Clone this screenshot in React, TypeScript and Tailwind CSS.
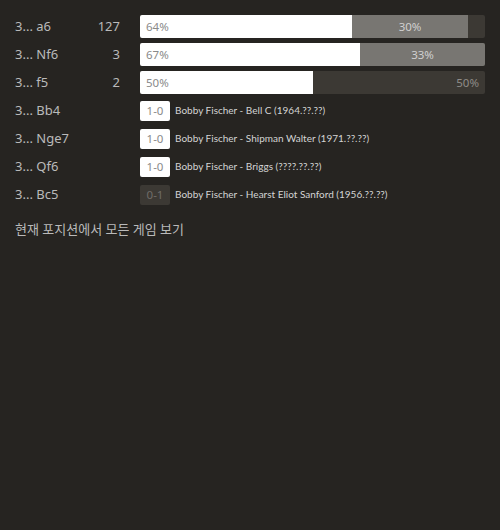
const moves = [
  { san: "a6", count: 127, white: 212, draw: 116, wLabel: "64%", dLabel: "30%", bLabel: "" },
  { san: "Nf6", count: 3, white: 220, draw: 125, wLabel: "67%", dLabel: "33%", bLabel: "" },
  { san: "f5", count: 2, white: 173, draw: 0, wLabel: "50%", dLabel: "", bLabel: "50%" },
];

const games = [
  { san: "Bb4", result: "1-0", text: "Bobby Fischer - Bell C (1964.??.??)" },
  { san: "Nge7", result: "1-0", text: "Bobby Fischer - Shipman Walter (1971.??.??)" },
  { san: "Qf6", result: "1-0", text: "Bobby Fischer - Briggs (????.??.??)" },
  { san: "Bc5", result: "0-1", text: "Bobby Fischer - Hearst Eliot Sanford (1956.??.??)" },
];

export default function App() {
  return (
    <div
      className="w-[500px] h-[530px] bg-[#262421] text-[#bababa] pt-[15px] px-[15px]"
      style={{ fontFamily: '"Noto Sans", "Noto Sans CJK KR", sans-serif' }}
    >
      {moves.map((m) => (
        <div key={m.san} className="flex items-center h-[23px] mb-[5px] text-[13px]">
          <div className="w-[80px]">3... {m.san}</div>
          <div className="w-[25px] text-right">{m.count}</div>
          <div className="ml-[20px] flex-1 flex h-full rounded-[2px] overflow-hidden bg-[#3c3934] text-[11.5px]">
            <div
              className="shrink-0 bg-white text-[#8a8a8a] flex items-center pl-[6px]"
              style={{ width: m.white }}
            >
              {m.wLabel}
            </div>
            {m.draw > 0 && (
              <div
                className="shrink-0 bg-[#787672] text-[#d0d0d0] flex items-center justify-center"
                style={{ width: m.draw }}
              >
                {m.dLabel}
              </div>
            )}
            <div className="flex-1 flex items-center justify-end pr-[6px] text-[#8f8c88]">
              {m.bLabel}
            </div>
          </div>
        </div>
      ))}
      {games.map((g) => (
        <div key={g.san} className="flex items-center h-[23px] mb-[5px] text-[13px]">
          <div className="w-[125px]">3... {g.san}</div>
          <div
            className={
              "w-[30px] h-[20px] rounded-[2px] flex items-center justify-center text-[11.5px] " +
              (g.result === "1-0" ? "bg-white text-[#8a8a8a]" : "bg-[#3c3934] text-[#6f6c68]")
            }
          >
            {g.result}
          </div>
          <div className="ml-[5px] text-[10px] text-[#d4d4d4] font-['Lato',sans-serif]">{g.text}</div>
        </div>
      ))}
      <div className="mt-[14px] text-[13px] text-[#bababa] cursor-pointer">
        현재 포지션에서 모든 게임 보기
      </div>
    </div>
  );
}
